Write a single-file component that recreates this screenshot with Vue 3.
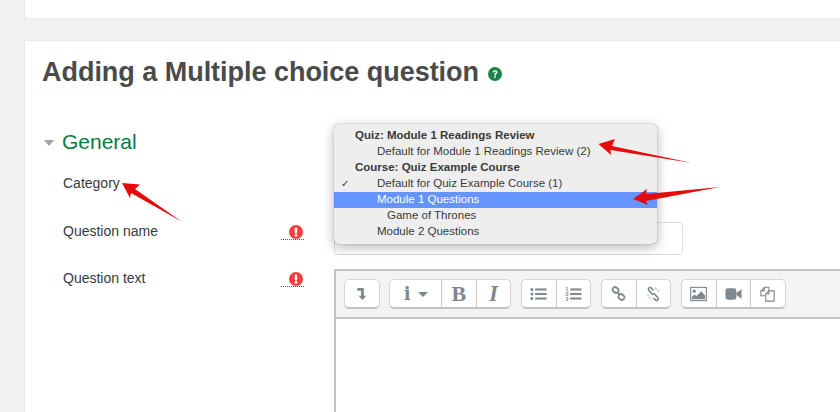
<template>
  <div class="page">
    <div class="card card-top"></div>
    <div class="card card-main">
      <h2 class="title">
        Adding a Multiple choice question
        <svg class="help" viewBox="0 0 14 14">
          <circle cx="7" cy="7" r="7" fill="#1f8249" />
          <path d="M4.600 5.300C4.800 3.900 5.800 3.200 7.100 3.200c1.400 0 2.400.8 2.400 2 0 1-.6 1.500-1.200 1.900-.5.3-.6.5-.6 1v.3H6.200v-.5c0-.8.3-1.200 1-1.700.4-.3.7-.5.7-.9 0-.4-.3-.7-.8-.7-.5 0-.8.3-.9.8z" fill="#fff" />
          <rect x="6.200" y="9.100" width="1.600" height="1.600" fill="#fff" />
        </svg>
      </h2>

      <div class="section-head">
        <span class="caret"></span>
        <span class="section-name">General</span>
      </div>

      <div class="form-row row-category">
        <label class="form-label">Category</label>
      </div>
      <div class="form-row row-name">
        <label class="form-label">Question name</label>
        <span class="required">
          <svg viewBox="0 0 14 14"><circle cx="7" cy="7" r="7" fill="#f53d3d" /><rect x="5.800" y="2.600" width="2.400" height="5.800" rx="1" fill="#fff" /><circle cx="7" cy="10.400" r="1.300" fill="#fff" /></svg>
        </span>
        <div class="text-input"></div>
      </div>
      <div class="form-row row-text">
        <label class="form-label">Question text</label>
        <span class="required">
          <svg viewBox="0 0 14 14"><circle cx="7" cy="7" r="7" fill="#f53d3d" /><rect x="5.800" y="2.600" width="2.400" height="5.800" rx="1" fill="#fff" /><circle cx="7" cy="10.400" r="1.300" fill="#fff" /></svg>
        </span>
        <div class="editor">
          <div class="toolbar">
            <div class="btn-group group-first">
              <button class="btn">
                <svg viewBox="0 0 16 16"><path d="M3.500 2h7v8.500h2.600L9 15 4.900 10.500h2.600V5H3.500z" fill="#7d888f" /></svg>
              </button>
            </div>
            <div class="btn-group">
              <button class="btn btn-wide"><span class="glyph-i">i</span><span class="mini-caret"></span></button>
              <button class="btn"><span class="glyph-b">B</span></button>
              <button class="btn"><span class="glyph-em">I</span></button>
            </div>
            <div class="btn-group">
              <button class="btn">
                <svg viewBox="0 0 18 16" class="icon-lg">
                  <g fill="#7d888f">
                    <circle cx="2" cy="3.200" r="1.600" /><circle cx="2" cy="8" r="1.600" /><circle cx="2" cy="12.800" r="1.600" />
                    <rect x="5.500" y="2.100" width="12" height="2.200" /><rect x="5.500" y="6.900" width="12" height="2.200" /><rect x="5.500" y="11.700" width="12" height="2.200" />
                  </g>
                </svg>
              </button>
              <button class="btn">
                <svg viewBox="0 0 18 16" class="icon-lg">
                  <g fill="#7d888f">
                    <text x="0.500" y="5.200" class="num">1</text>
                    <text x="0.500" y="10.200" class="num">2</text>
                    <text x="0.500" y="15.200" class="num">3</text>
                    <rect x="5.500" y="2.100" width="12" height="2.200" /><rect x="5.500" y="6.900" width="12" height="2.200" /><rect x="5.500" y="11.700" width="12" height="2.200" />
                  </g>
                </svg>
              </button>
            </div>
            <div class="btn-group">
              <button class="btn">
                <svg viewBox="0 0 18 18" class="icon-link">
                  <g fill="none" stroke="#7d888f" stroke-width="2.100">
                    <rect x="1.800" y="1.800" width="7.400" height="6" rx="3" transform="rotate(40 5.500 4.800)" />
                    <rect x="8.800" y="10.200" width="7.400" height="6" rx="3" transform="rotate(40 12.500 13.200)" />
                    <path d="M7.500 7l3 3.800" />
                  </g>
                </svg>
              </button>
              <button class="btn">
                <svg viewBox="0 0 18 18" class="icon-lg">
                  <g fill="none" stroke="#7d888f" stroke-width="1.800">
                    <path d="M9 5L6.500 2.300C5.500 1.300 4 1.600 3.500 2.700c-.4.900-.2 1.800.5 2.500l4.500 4.800" />
                    <path d="M9 8l4.800 5c.8.800.8 2 0 2.800-.8.800-2 .6-2.800-.2L9 13.500" />
                  </g>
                  <g stroke="#a9b1b6" stroke-width="0.900">
                    <path d="M11 1.500v3M13.500 2l-1.500 2.500M16 5l-3 1M1 10l3 .5M2.500 14l2.500-2M6 15.500l.5-2.500" />
                  </g>
                </svg>
              </button>
            </div>
            <div class="btn-group">
              <button class="btn">
                <svg viewBox="0 0 18 16" class="icon-lg">
                  <rect x="0.700" y="1" width="16.600" height="14" fill="none" stroke="#7d888f" stroke-width="1.200" />
                  <circle cx="4.500" cy="5" r="1.700" fill="#7d888f" />
                  <path d="M2 13.500V11l3-2.500 2 1.500 5-5 4 4.500v4z" fill="#7d888f" />
                </svg>
              </button>
              <button class="btn">
                <svg viewBox="0 0 18 16" class="icon-lg">
                  <rect x="0.500" y="2" width="11.500" height="12" rx="2.500" fill="#7d888f" />
                  <path d="M12 7l5.500-4v10L12 9z" fill="#7d888f" />
                </svg>
              </button>
              <button class="btn">
                <svg viewBox="0 0 18 18" class="icon-lg">
                  <g fill="#fff" stroke="#7d888f" stroke-width="1.200">
                    <path d="M1.500 11V5.500L5.500 1.500H10.500V11z" />
                    <path d="M7 17V9L10.500 5.500H16.500V17z" />
                    <path d="M5.500 1.500v4h-4M10.500 5.500v3.500H7" fill="none" />
                  </g>
                </svg>
              </button>
            </div>
          </div>
          <div class="editor-body"></div>
        </div>
      </div>
    </div>

    <ul class="menu">
      <li
        v-for="item in menuItems"
        :key="item.label"
        class="menu-item"
        :class="[`level-${item.level}`, { active: item.active }]"
      >
        <span v-if="item.checked" class="check">✓</span>
        {{ item.label }}
      </li>
    </ul>

    <svg class="arrows" width="840" height="412" viewBox="0 0 840 412">
      <g fill="#e60a0a">
        <polygon points="122,183 140,184.500 135,189 181.500,221.500 131,193 130,198" />
        <polygon points="598.500,144 615,139 612,146 692,163 610.500,150 611,155" />
        <polygon points="633,199 647,189 646,194 720,187 646,201 648,205" />
      </g>
    </svg>
  </div>
</template>

<script setup>
const menuItems = [
  { label: 'Quiz: Module 1 Readings Review', level: 0 },
  { label: 'Default for Module 1 Readings Review (2)', level: 1 },
  { label: 'Course: Quiz Example Course', level: 0 },
  { label: 'Default for Quiz Example Course (1)', level: 1, checked: true },
  { label: 'Module 1 Questions', level: 1, active: true },
  { label: 'Game of Thrones', level: 2 },
  { label: 'Module 2 Questions', level: 1 }
]
</script>

<style>
html,
body {
  margin: 0;
  background: #f2f2f2;
}
</style>

<style scoped>
.page {
  position: relative;
  width: 840px;
  height: 412px;
  overflow: hidden;
  padding-left: 24px;
  box-sizing: border-box;
  background: #f2f2f2;
  font-family: "Liberation Sans", Arial, sans-serif;
  color: #373a3c;
}

.card {
  width: 860px;
  box-sizing: border-box;
  background: #fff;
  border: 1px solid #e9e9e9;
  border-right: none;
}

.card-top {
  height: 19px;
  margin-bottom: 21px;
  border-top: none;
}

.card-main {
  height: 420px;
  padding-left: 17px;
}

.title {
  display: flex;
  align-items: center;
  gap: 9px;
  margin: 0;
  padding-top: 14px;
  height: 34px;
  font-size: 27px;
  line-height: 34px;
  font-weight: 700;
  letter-spacing: -0.03px;
  color: #4a4a4a;
}

.help {
  width: 14px;
  height: 14px;
  margin-top: 3px;
}

.section-head {
  display: flex;
  align-items: center;
  margin-top: 40px;
  height: 26px;
}

.caret {
  width: 0;
  height: 0;
  margin: 2px 8px 0 2px;
  border-left: 5.5px solid transparent;
  border-right: 5.5px solid transparent;
  border-top: 6px solid #a3a3a3;
}

.section-name {
  font-size: 21px;
  color: #0a7a42;
}

.form-row {
  display: grid;
  grid-template-columns: 218px 23px 1fr;
  column-gap: 0;
  padding-left: 21px;
  margin-bottom: 14px;
}

.row-category {
  height: 34px;
  margin-top: 19px;
}

.form-label {
  font-size: 14px;
  line-height: 18px;
  color: #373a3c;
}

.required {
  display: block;
  height: 14px;
  width: 23px;
  padding-top: 3px;
  border-bottom: 1px dotted #555;
  box-sizing: content-box;
}

.required svg {
  display: block;
  width: 14px;
  height: 14px;
  margin-left: 8px;
}

.text-input {
  width: 349px;
  height: 33px;
  margin-left: 30px;
  box-sizing: border-box;
  background: #fff;
  border: 1px solid #ddd;
  border-radius: 4px;
}

.editor {
  margin-left: 30px;
  width: 600px;
  box-sizing: border-box;
  border-top: 2px solid #c4c4c4;
  border-left: 2px solid #c4c4c4;
}

.toolbar {
  display: flex;
  gap: 10px;
  height: 48px;
  padding: 8px 0 0 8px;
  box-sizing: border-box;
  background: #f3f3f3;
  border-bottom: 2px solid #c4c4c4;
}

.btn-group {
  display: flex;
  height: 30px;
  box-sizing: border-box;
  background: #fff;
  border: 1px solid #d6d6d6;
  border-bottom: 2px solid #c4c4c4;
  border-radius: 5px;
}

.group-first {
  margin-right: -0.4px;
}

.btn {
  display: flex;
  align-items: center;
  justify-content: center;
  width: 33.5px;
  height: 100%;
  padding: 0;
  box-sizing: content-box;
  background: none;
  border: none;
  border-left: 1px solid #c9c9c9;
}

.btn:first-child {
  border-left: none;
}

.btn-wide {
  width: 51px;
  gap: 7px;
}

.btn svg {
  width: 15px;
  height: 15px;
}

.btn svg.icon-lg {
  width: 17px;
  height: 16px;
}

.btn svg.icon-link {
  width: 15px;
  height: 15px;
}

.num {
  font-family: "Liberation Sans", sans-serif;
  font-size: 5.5px;
  font-weight: 700;
}

.glyph-i {
  font-family: "DejaVu Serif", serif;
  font-size: 18px;
  font-weight: 700;
  color: #7d888f;
}

.mini-caret {
  width: 0;
  height: 0;
  margin-top: 2px;
  border-left: 5px solid transparent;
  border-right: 5px solid transparent;
  border-top: 5px solid #7d888f;
}

.glyph-b {
  font-family: "Liberation Serif", serif;
  font-size: 22px;
  font-weight: 700;
  color: #7d888f;
}

.glyph-em {
  font-family: "Liberation Serif", serif;
  font-size: 23px;
  font-style: italic;
  font-weight: 700;
  color: #7d888f;
}

.editor-body {
  height: 150px;
  background: #fff;
}

.menu {
  position: absolute;
  top: 124px;
  left: 334px;
  width: 323px;
  height: 120px;
  margin: 0;
  padding: 4px 0;
  box-sizing: border-box;
  list-style: none;
  background: #eeeeee;
  border-radius: 5px;
  box-shadow: 0 0 1px rgba(0, 0, 0, 0.5), 0 3px 12px rgba(0, 0, 0, 0.3);
  font-size: 11.5px;
  color: #3a3a3a;
}

.menu-item {
  position: relative;
  height: 16px;
  line-height: 15px;
  white-space: nowrap;
}

.level-0 {
  padding-left: 21px;
  font-weight: 700;
}

.level-1 {
  padding-left: 43px;
}

.level-2 {
  padding-left: 53px;
}

.active {
  background: #6694ff;
  color: #fff;
}

.check {
  position: absolute;
  left: 7px;
  top: 0;
  font-family: "DejaVu Sans", sans-serif;
  font-size: 10px;
}

.arrows {
  position: absolute;
  top: 0;
  left: 0;
  pointer-events: none;
}
</style>
